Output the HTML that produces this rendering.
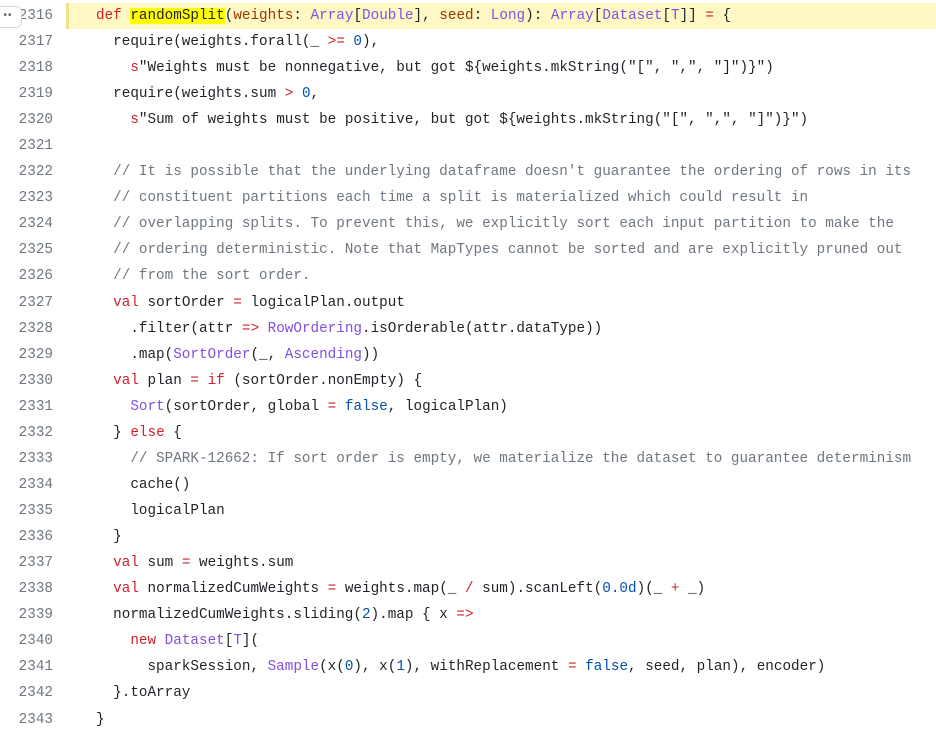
<!DOCTYPE html>
<html><head><meta charset="utf-8"><style>
html,body{margin:0;padding:0;background:#fff;width:936px;height:735px;overflow:hidden}
.wrap{position:relative;width:936px;height:735px;font-family:"Liberation Mono",monospace;font-size:14.3px;color:#1f2328}
.hl{position:absolute;left:66px;top:3px;width:870px;height:26px;background:#fff8c5;border-left:3px solid #f5df8a;box-sizing:border-box}
.ln{position:absolute;left:0;width:53px;text-align:right;color:#6e7781;line-height:26px}
.code{position:absolute;left:96px;line-height:26px;white-space:pre}
.k{color:#cf222e}.t{color:#8250df}.n{color:#0550ae}.c{color:#6e7781}.p{color:#953800}
.m{background:#ffff00}
.btn{position:absolute;left:-6px;top:6px;width:26px;height:20px;border:1px solid #d0d7de;border-radius:6px;background:#fff;font-size:10px;line-height:18px;text-align:center;color:#57606a;font-family:"Liberation Sans",sans-serif;letter-spacing:1px}
</style></head><body><div class="wrap">
<div class="hl"></div>
<div class="ln" style="top:3px">2316</div>
<div class="code" style="top:3px"><span class="k">def</span> <span class="m">randomSplit</span>(<span class="p">weights</span>: <span class="t">Array</span>[<span class="t">Double</span>], <span class="p">seed</span>: <span class="t">Long</span>): <span class="t">Array</span>[<span class="t">Dataset</span>[<span class="t">T</span>]] <span class="k">=</span> {</div>
<div class="ln" style="top:29px">2317</div><div class="code" style="top:29px">  require(weights.forall(_ <span class="k">&gt;=</span> <span class="n">0</span>),</div>
<div class="ln" style="top:55px">2318</div><div class="code" style="top:55px">    <span class="k">s</span>"Weights must be nonnegative, but got ${weights.mkString("[", ",", "]")}")</div>
<div class="ln" style="top:81px">2319</div><div class="code" style="top:81px">  require(weights.sum <span class="k">&gt;</span> <span class="n">0</span>,</div>
<div class="ln" style="top:107px">2320</div><div class="code" style="top:107px">    <span class="k">s</span>"Sum of weights must be positive, but got ${weights.mkString("[", ",", "]")}")</div>
<div class="ln" style="top:133px">2321</div>
<div class="ln" style="top:159px">2322</div><div class="code c" style="top:159px">  // It is possible that the underlying dataframe doesn't guarantee the ordering of rows in its</div>
<div class="ln" style="top:185px">2323</div><div class="code c" style="top:185px">  // constituent partitions each time a split is materialized which could result in</div>
<div class="ln" style="top:211px">2324</div><div class="code c" style="top:211px">  // overlapping splits. To prevent this, we explicitly sort each input partition to make the</div>
<div class="ln" style="top:237px">2325</div><div class="code c" style="top:237px">  // ordering deterministic. Note that MapTypes cannot be sorted and are explicitly pruned out</div>
<div class="ln" style="top:263px">2326</div><div class="code c" style="top:263px">  // from the sort order.</div>
<div class="ln" style="top:290px">2327</div><div class="code" style="top:290px">  <span class="k">val</span> sortOrder <span class="k">=</span> logicalPlan.output</div>
<div class="ln" style="top:316px">2328</div><div class="code" style="top:316px">    .filter(attr <span class="k">=&gt;</span> <span class="t">RowOrdering</span>.isOrderable(attr.dataType))</div>
<div class="ln" style="top:342px">2329</div><div class="code" style="top:342px">    .map(<span class="t">SortOrder</span>(_, <span class="t">Ascending</span>))</div>
<div class="ln" style="top:368px">2330</div><div class="code" style="top:368px">  <span class="k">val</span> plan <span class="k">=</span> <span class="k">if</span> (sortOrder.nonEmpty) {</div>
<div class="ln" style="top:394px">2331</div><div class="code" style="top:394px">    <span class="t">Sort</span>(sortOrder, global <span class="k">=</span> <span class="n">false</span>, logicalPlan)</div>
<div class="ln" style="top:420px">2332</div><div class="code" style="top:420px">  } <span class="k">else</span> {</div>
<div class="ln" style="top:446px">2333</div><div class="code c" style="top:446px">    // SPARK-12662: If sort order is empty, we materialize the dataset to guarantee determinism</div>
<div class="ln" style="top:472px">2334</div><div class="code" style="top:472px">    cache()</div>
<div class="ln" style="top:498px">2335</div><div class="code" style="top:498px">    logicalPlan</div>
<div class="ln" style="top:524px">2336</div><div class="code" style="top:524px">  }</div>
<div class="ln" style="top:550px">2337</div><div class="code" style="top:550px">  <span class="k">val</span> sum <span class="k">=</span> weights.sum</div>
<div class="ln" style="top:576px">2338</div><div class="code" style="top:576px">  <span class="k">val</span> normalizedCumWeights <span class="k">=</span> weights.map(_ <span class="k">/</span> sum).scanLeft(<span class="n">0.0d</span>)(_ <span class="k">+</span> _)</div>
<div class="ln" style="top:602px">2339</div><div class="code" style="top:602px">  normalizedCumWeights.sliding(<span class="n">2</span>).map { x <span class="k">=&gt;</span></div>
<div class="ln" style="top:628px">2340</div><div class="code" style="top:628px">    <span class="k">new</span> <span class="t">Dataset</span>[<span class="t">T</span>](</div>
<div class="ln" style="top:654px">2341</div><div class="code" style="top:654px">      sparkSession, <span class="t">Sample</span>(x(<span class="n">0</span>), x(<span class="n">1</span>), withReplacement <span class="k">=</span> <span class="n">false</span>, seed, plan), encoder)</div>
<div class="ln" style="top:680px">2342</div><div class="code" style="top:680px">  }.toArray</div>
<div class="ln" style="top:707px">2343</div><div class="code" style="top:707px">}</div>
<div class="btn">••</div>
</div>
</body></html>
